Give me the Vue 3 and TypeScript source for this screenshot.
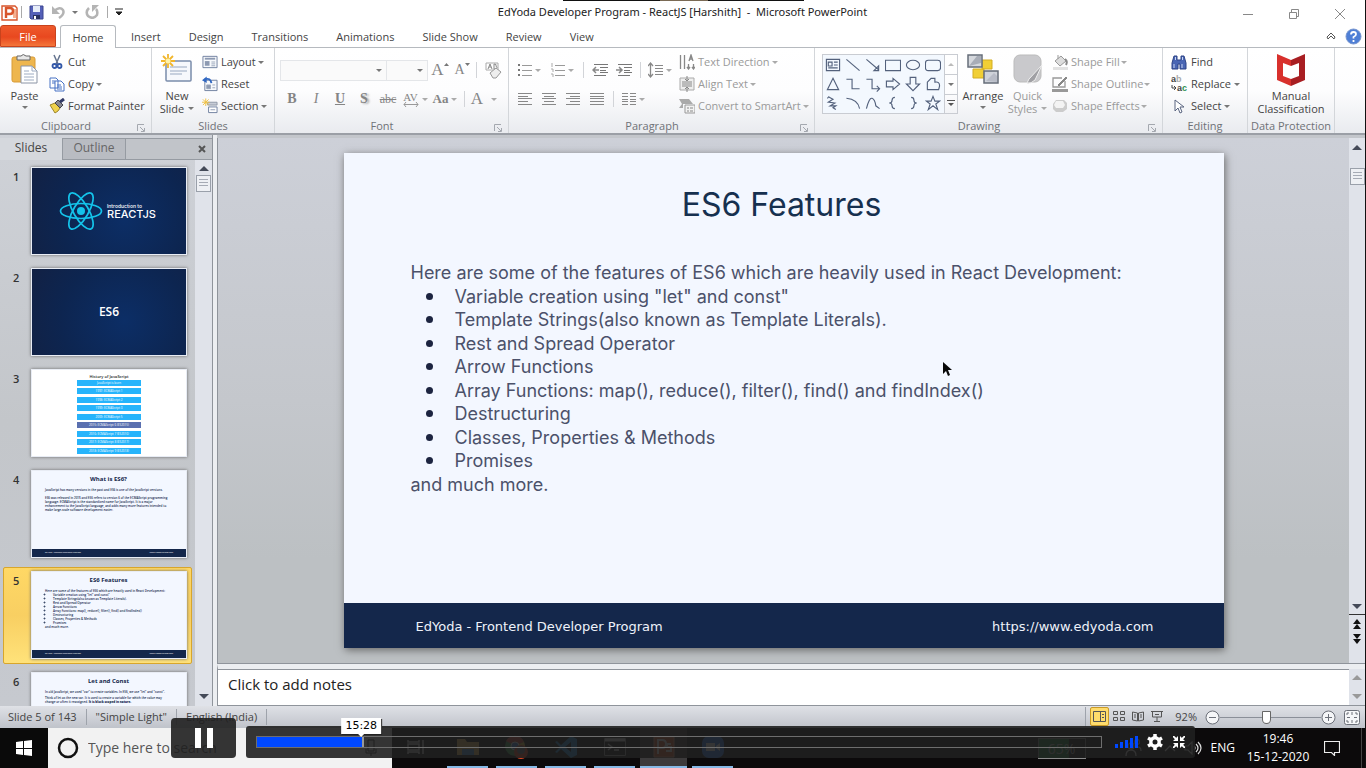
<script setup lang="ts">
import { ref, computed } from 'vue'

const tabs: string[] = ['Insert', 'Design', 'Transitions', 'Animations', 'Slide Show', 'Review', 'View']

const shapes: string[] = [
  'M1 2h14v12H1zM3 5h4v4H3zM9 5h4M9 8h4M3 11h10',
  'M1 2l14 12',
  'M1 2l13 11M14 9v5h-5z',
  'M0 3h16v11H0z',
  'M15 8a7 5 0 1 1-14 0a7 5 0 1 1 14 0',
  'M3 3h10q3 0 3 3v5q0 3-3 3H3q-3 0-3-3V6q0-3 3-3z',
  'M8 2l6 12H2z',
  'M1 3h6v10h8',
  'M1 3h6v10h8M12 10l3 3-3 3',
  'M1 5h7V2l7 6-7 6v-3H1z',
  'M5 1h6v7h4l-7 7-7-7h4z',
  'M2 6l4-4h4v4q5-1 5 4l-1 4H2z',
  'M4 2l4 2-5 3 7 1-5 3 6 0-3 2 3 2M2 3l2-2',
  'M1 3q12 1 14 11',
  'M1 14Q4 2 7 3t4 8l4 3',
  'M10 2q-3 0-3 3t-3 3q3 0 3 3t3 3',
  'M6 2q3 0 3 3t3 3q-3 0-3 3t-3 3',
  'M8 1l2 5h5l-4 3 2 6-5-4-5 4 2-6-4-3h5z',
]

const bullets: string[] = [
  'Variable creation using "let" and const"',
  'Template Strings(also known as Template Literals).',
  'Rest and Spread Operator',
  'Arrow Functions',
  'Array Functions: map(), reduce(), filter(), find() and findIndex()',
  'Destructuring',
  'Classes, Properties & Methods',
  'Promises',
]

const history: string[] = [
  'JavaScript is born',
  '1997: ECMAScript 1',
  '1998: ECMAScript 2',
  '1999: ECMAScript 3',
  '2009: ECMAScript 5',
  '2015: ECMAScript 6 (ES2015)',
  '2016: ECMAScript 7 (ES2016)',
  '2017: ECMAScript 8 (ES2017)',
  '2018: ECMAScript 9 (ES2018)',
]

const zoom = ref<number>(46)
const duration = 7460
const position = ref<number>(928)
const percent = computed<number>(() => (position.value / duration) * 100)
const clock = computed<string>(
  () => `${Math.floor(position.value / 60)}:${String(position.value % 60).padStart(2, '0')}`,
)
const notes = ref<string>('')
const query = ref<string>('')
</script>

<template>
  <div class="screen">
    <div class="share-strip"><i></i></div>

    <header class="titlebar">
      <div class="quick">
        <svg class="app" width="17" height="17" viewBox="0 0 17 17"><path d="M1 2h13l2 2v12H1z" fill="#fff" stroke="#d8552c" stroke-width="1.4" /><path d="M12 5h3v9h-3" fill="#f5b08f" /><path d="M5 14V4h4q3 0 3 3t-3 3H5" fill="none" stroke="#d8552c" stroke-width="2.400" /></svg>
        <span class="vbar"></span>
        <button aria-label="Save"><svg width="15" height="15" viewBox="0 0 15 15"><path d="M1 1h13v13H2l-1-1z" fill="#5460b8" stroke="#3a448f" /><path d="M4 1h7v6H4z" fill="#e6ecf8" /><path d="M4 10h7v4H4z" fill="#28305f" /><path d="M5 11h2v3H5z" fill="#fff" /></svg></button>
        <button aria-label="Undo"><svg width="15" height="14" viewBox="0 0 15 14"><path d="M3 6q6-5 9-1 2 4-4 8" fill="none" stroke="#b4b4b4" stroke-width="2.500" /><path d="M1 1v8h8z" fill="#b4b4b4" /></svg><span class="caret"></span></button>
        <button aria-label="Redo"><svg width="15" height="14" viewBox="0 0 15 14"><path d="M4 3q-4 4-1 8 5 4 9-1 1-4-1-6" fill="none" stroke="#b4b4b4" stroke-width="2.500" /><path d="M7 7V0h7z" fill="#b4b4b4" /></svg></button>
        <span class="vbar"></span>
        <button aria-label="Customize toolbar"><svg width="8" height="8" viewBox="0 0 8 8"><path d="M0 1h8M1 4h6L4 7z" stroke="#222" fill="#222" /></svg></button>
      </div>
      <h1>EdYoda Developer Program - ReactJS [Harshith]&nbsp; -&nbsp; Microsoft PowerPoint</h1>
      <div class="win">
        <button aria-label="Minimize"><svg width="12" height="12" viewBox="0 0 12 12"><path d="M1 6.500h10" /></svg></button>
        <button aria-label="Restore"><svg width="12" height="12" viewBox="0 0 12 12"><path d="M1.500 4.500h7v6h-7zM3.500 4V1.500h7v7H9" /></svg></button>
        <button aria-label="Close"><svg width="12" height="12" viewBox="0 0 12 12"><path d="M1 1l10 10M11 1L1 11" /></svg></button>
      </div>
    </header>

    <nav class="tabs">
      <button class="file">File</button>
      <button class="home">Home</button>
      <button v-for="t in tabs" :key="t" class="tab">{{ t }}</button>
      <span class="grow"></span>
      <button class="mini" aria-label="Minimize the ribbon"><svg width="10" height="8" viewBox="0 0 10 8"><path d="M1 5l4-4 4 4-1 2-3-3-3 3z" fill="#fff" stroke="#555" /></svg></button>
      <button class="mini help" aria-label="Help"><svg width="17" height="17" viewBox="0 0 17 17"><circle cx="8.500" cy="8.500" r="7.500" fill="#4f7fd6" stroke="#7896cf" /><path d="M6 6.500Q6 4 8.500 4T11 6.300Q11 8 8.500 9v1.500M8.500 12v2" fill="none" stroke="#fff" stroke-width="1.800" /></svg></button>
    </nav>

    <section class="ribbon">
      <div class="group clipboard">
        <div class="tools">
          <button class="big"><svg width="28" height="30" viewBox="0 0 28 30"><rect x="1" y="3" width="23" height="25" rx="2" fill="#eeb64e" stroke="#d89b37" /><path d="M6 2h4q2-3 5 0h4v4H6z" fill="#e8e8e8" stroke="#666" /><path d="M10 12h11l5 5v12H10z" fill="#fff" stroke="#8b94a5" /><path d="M21 12v5h5M13 17h5M13 20h10M13 23h10M13 26h10" fill="none" stroke="#9eacc2" /></svg><span>Paste</span><i class="caret"></i></button>
          <div class="stack">
            <button><svg width="16" height="16" viewBox="0 0 16 16"><path d="M5 1l4 9M11 1L7 10" stroke="#64738e" stroke-width="1.500" /><circle cx="5.500" cy="12" r="2" fill="none" stroke="#3358a8" stroke-width="1.800" /><circle cx="10.500" cy="12" r="2" fill="none" stroke="#3358a8" stroke-width="1.800" /></svg>Cut</button>
            <button><svg width="16" height="16" viewBox="0 0 16 16"><path d="M1 2h6l2 2v8H1zM6 5h6l3 3v7H6z" fill="#fff" stroke="#4872c4" /><path d="M3 5h3M3 7h3M8 9h4M8 11h5M8 13h5" stroke="#4872c4" /></svg>Copy<i class="caret"></i></button>
            <button><svg width="16" height="16" viewBox="0 0 16 16"><path d="M1 7l5-2 5 5-2 3-3 2z" fill="#f0d24c" stroke="#9c852c" /><path d="M6 5l3-3 5 5-3 3z" fill="#868690" stroke="#44444c" /><path d="M11 4l4-3" stroke="#333a66" stroke-width="3" /></svg>Format Painter</button>
          </div>
        </div>
        <div class="cap"><span>Clipboard</span><button class="launch" aria-label="Clipboard options"><svg width="8" height="8" viewBox="0 0 8 8"><path d="M.5 7V.5H7" /><path d="M3 3l4 4M7.500 4v3.500H4" /></svg></button></div>
      </div>

      <div class="group slides-g">
        <div class="tools">
          <button class="big"><svg width="32" height="30" viewBox="0 0 32 30"><rect x="5" y="7" width="25" height="20" rx="1" fill="#f6f8fc" stroke="#7a8cab" stroke-width="1.500" /><path d="M9 13h17M9 17h17M9 20h12" stroke="#b8c2d4" stroke-width="1.500" /><path d="M7 0v14M0 7h14M2 2l10 10M12 2L2 12" stroke="#f1b62c" stroke-width="1.800" /><circle cx="7" cy="7" r="2.500" fill="#fff2a8" /></svg><span>New</span><span>Slide <i class="caret"></i></span></button>
          <div class="stack">
            <button><svg width="16" height="14" viewBox="0 0 17 14"><path d="M1 1h15v12H1z" fill="#f7f9fc" stroke="#6e7f9e" /><path d="M3 3.500h11" stroke="#8d9ab2" stroke-width="2" /><path d="M3 6h5v5H3z" fill="#8d9ab2" /><path d="M10 7h4M10 9h4M10 11h4" stroke="#9aa6bb" /></svg>Layout<i class="caret"></i></button>
            <button><svg width="16" height="16" viewBox="0 0 17 16"><path d="M3 4h13v11H3z" fill="#f7f9fc" stroke="#6e7f9e" /><path d="M5 9h4v4H5zM11 9h3M11 12h3" fill="#8d9ab2" stroke="#9aa6bb" /><path d="M3 3q6-2 7 4" fill="none" stroke="#3168c2" stroke-width="2" /><path d="M0 4l5-4v7z" fill="#3168c2" /></svg>Reset</button>
            <button><svg width="16" height="16" viewBox="0 0 17 16"><path d="M6 4h10v3H6z" fill="#c7ccd6" stroke="#8e97a8" /><path d="M7 9h9v6H7z" fill="#fff" stroke="#6e7f9e" /><path d="M9 12h5" stroke="#8d9ab2" /><path d="M4 0v8M0 4h8M1 1l6 6M7 1L1 7" stroke="#efc03f" /></svg>Section<i class="caret"></i></button>
          </div>
        </div>
        <div class="cap"><span>Slides</span></div>
      </div>

      <div class="group font-g dis">
        <div class="rows">
          <div class="row">
            <label class="combo face"><select aria-label="Font" disabled></select><i class="caret"></i></label>
            <label class="combo size"><select aria-label="Font size" disabled></select><i class="caret"></i></label>
            <button class="w24 serif s18" aria-label="Grow font">A<svg width="5" height="4" viewBox="0 0 5 4"><path d="M0 3l2.500-3L5 3z" /></svg></button>
            <button class="w20 serif s15" aria-label="Shrink font">A<svg width="5" height="4" viewBox="0 0 5 4"><path d="M0 0l2.500 3L5 0z" /></svg></button>
            <span class="vbar"></span>
            <button class="w24" aria-label="Clear formatting"><svg width="17" height="17" viewBox="0 0 17 17"><path d="M1 1h12v7H1z" fill="#fff" stroke="#aaa" /><path d="M3 7l2-5 2 5M4 5h2M9 2v5h2q2-1 0-3 1-2-2-2" fill="none" stroke="#888" /><path d="M5 11l6-5 5 4-5 6H8z" fill="#eee" stroke="#999" /></svg></button>
          </div>
          <div class="row">
            <button class="w24 serif bold">B</button>
            <button class="w24 serif ital">I</button>
            <button class="w24 serif bold und">U</button>
            <button class="w24 serif bold shade">S</button>
            <button class="w24 serif strike">abc</button>
            <button class="w30 serif spacing"><span>AV<svg width="16" height="5" viewBox="0 0 16 5"><path d="M1 2.500h14M3 0L1 2.500 3 5M13 0l2 2.500L13 5" fill="none" stroke="#999" /></svg></span><i class="caret"></i></button>
            <button class="w30 serif bold aa">Aa<i class="caret"></i></button>
            <span class="vbar"></span>
            <button class="w30 serif s18">A<i class="caret far"></i></button>
          </div>
        </div>
        <div class="cap"><span>Font</span><button class="launch" aria-label="Font options"><svg width="8" height="8" viewBox="0 0 8 8"><path d="M.5 7V.5H7" /><path d="M3 3l4 4M7.500 4v3.500H4" /></svg></button></div>
      </div>

      <div class="group para dis">
        <div class="tools">
          <div class="rows">
            <div class="row">
              <button class="w33" aria-label="Bullets"><svg width="14" height="14" viewBox="0 0 14 14"><path d="M0 2h2M0 7h2M0 12h2" stroke="#777" stroke-width="2" /><path d="M4 2.500h10M4 7.500h10M4 12.500h10" stroke="#999" /></svg><i class="caret"></i></button>
              <button class="w33" aria-label="Numbering"><svg width="14" height="14" viewBox="0 0 14 14"><path d="M1 0v4M0 6h2v3M0 11h2v3" stroke="#aaa" fill="none" /><path d="M4 2.500h10M4 7.500h10M4 12.500h10" stroke="#999" /></svg><i class="caret"></i></button>
              <span class="vbar"></span>
              <button class="w24" aria-label="Decrease indent"><svg width="16" height="14" viewBox="0 0 16 14"><path d="M2 1.500h14M8 4.500h8M8 7.500h6M8 9.500h8M2 12.500h12" stroke="#777" /><path d="M7 7H1M4 4L1 7l3 3" fill="none" stroke="#888" stroke-width="1.500" /></svg></button>
              <button class="w24" aria-label="Increase indent"><svg width="16" height="14" viewBox="0 0 16 14"><path d="M2 1.500h14M8 4.500h8M8 7.500h6M8 9.500h8M2 12.500h12" stroke="#777" /><path d="M0 7h6M3 4l3 3-3 3" fill="none" stroke="#888" stroke-width="1.500" /></svg></button>
              <span class="vbar"></span>
              <button class="w30" aria-label="Line spacing"><svg width="15" height="16" viewBox="0 0 15 16"><path d="M2.500 1v14M0 4l2.500-3L5 4M0 12l2.500 3L5 12" fill="none" stroke="#888" stroke-width="1.300" /><path d="M7 3.500h8M7 6.500h8M7 9.500h8M7 12.500h8" stroke="#888" /></svg><i class="caret"></i></button>
            </div>
            <div class="row">
              <button class="w24" aria-label="Align left"><svg class="al" width="14" height="12" viewBox="0 0 14 12"><path d="M0 .5h14M0 3.500h10M0 5.500h14M0 8.500h10M0 11.500h14" /></svg></button>
              <button class="w24" aria-label="Center"><svg class="al" width="14" height="12" viewBox="0 0 14 12"><path d="M0 .5h14M2 3.500h10M0 5.500h14M2 8.500h10M0 11.500h14" /></svg></button>
              <button class="w24" aria-label="Align right"><svg class="al" width="14" height="12" viewBox="0 0 14 12"><path d="M0 .5h14M4 3.500h10M0 5.500h14M4 8.500h10M0 11.500h14" /></svg></button>
              <button class="w24" aria-label="Justify"><svg class="al" width="14" height="12" viewBox="0 0 14 12"><path d="M0 .5h14M0 3.500h14M0 5.500h14M0 8.500h14M0 11.500h14" /></svg></button>
              <span class="vbar"></span>
              <button class="w30 cols" aria-label="Columns"><svg class="al" width="14" height="12" viewBox="0 0 14 12"><path d="M0 .5h6M8 .5h6M0 3.500h6M8 3.500h6M0 6.500h6M8 6.500h6M0 8.500h6M8 8.500h6M0 11.500h6M8 11.500h6" /></svg><i class="caret"></i></button>
            </div>
          </div>
          <div class="stack">
            <button><svg width="16" height="16" viewBox="0 0 16 16"><path d="M1.500 1v14M5.500 1v14M10 7l2-6 2 6M10.500 5h3M9.500 10v5M14.500 10v5M8 13l1.500 2 1.500-2M13 13l1.500 2 1.500-2" fill="none" stroke="#888" stroke-width="1.300" /></svg>Text Direction<i class="caret"></i></button>
            <button><svg width="16" height="16" viewBox="0 0 16 16"><path d="M1 2h14v12H1z" fill="#eee" stroke="#aaa" /><path d="M3 6h10M3 8h10M3 10h10M8 0v5M6 3l2 2 2-2M8 16v-4M6 13l2-2 2 2" fill="none" stroke="#888" /></svg>Align Text<i class="caret"></i></button>
            <button><svg width="16" height="16" viewBox="0 0 16 16"><path d="M0 1h10l4 5H4v4H0l3-4z" fill="#aaa" /><path d="M6 7h10v8H6z" fill="#f2f2f2" stroke="#999" /><path d="M8 10h2M11 10h3M8 13h2M11 13h3" stroke="#888" /></svg>Convert to SmartArt<i class="caret"></i></button>
          </div>
        </div>
        <div class="cap"><span>Paragraph</span><button class="launch" aria-label="Paragraph options"><svg width="8" height="8" viewBox="0 0 8 8"><path d="M.5 7V.5H7" /><path d="M3 3l4 4M7.500 4v3.500H4" /></svg></button></div>
      </div>

      <div class="group drawing">
        <div class="tools">
          <div class="gallery">
            <div class="cells">
              <button v-for="(d, i) in shapes" :key="i" :aria-label="`Shape ${i + 1}`"><svg width="16" height="16" viewBox="-0.5 -0.5 17 17"><path :d="d" /></svg></button>
            </div>
            <div class="scroller">
              <button aria-label="Previous shapes"><i class="caret up pale"></i></button>
              <button aria-label="Next shapes"><i class="caret"></i></button>
              <button aria-label="More shapes"><svg width="8" height="7" viewBox="0 0 8 7"><path d="M0 .5h8" stroke="#555" /><path d="M1 3h6L4 6z" fill="#555" /></svg></button>
            </div>
          </div>
          <button class="big arrange"><svg width="32" height="30" viewBox="0 0 32 30"><path d="M6 15h11v9H6zM15 6h10v9H15z" fill="#f1cf35" stroke="#d3ad22" /><path d="M1 1h14v12H1z" fill="#d5d8dd" stroke="#666d79" stroke-width="1.500" /><path d="M2 12L10 2h4v7z" fill="#a8adb7" /><path d="M17 17h14v12H17z" fill="#cfd3da" stroke="#666d79" stroke-width="1.500" /><path d="M19 27l8-8 3 3v6z" fill="#b8bcc7" /></svg><span>Arrange</span><i class="caret"></i></button>
          <button class="big quick-st dis"><svg width="32" height="30" viewBox="0 0 32 30"><rect x="2" y="1" width="27" height="27" rx="6" fill="#c9c9cc" stroke="#bbb" /><path d="M17 25l13-14-7 15q-4 4-8 3z" fill="#a0a0a4" stroke="#eee" /></svg><span>Quick</span><span>Styles <i class="caret"></i></span></button>
          <div class="stack dis">
            <button><svg width="17" height="16" viewBox="0 0 17 16"><path d="M1 13h15v3H1z" fill="#e2e2e2" /><path d="M3 7l6-5 5 5-6 5zM6 5V1" fill="#ddd" stroke="#999" /><path d="M13 5q3 2 1 6" fill="none" stroke="#888" stroke-width="2" /></svg>Shape Fill<i class="caret"></i></button>
            <button><svg width="17" height="16" viewBox="0 0 17 16"><path d="M13 5v6H1V2h9" fill="none" stroke="#999" stroke-width="1.300" /><path d="M6 9L14 1l1 1-8 8z" fill="#888" stroke="#888" /><path d="M0 13h16v3H0z" fill="#999" /></svg>Shape Outline<i class="caret"></i></button>
            <button><svg width="17" height="16" viewBox="0 0 17 16"><path d="M4 2h8l3 3v6l-4 3H4l-3-3V6z" fill="#ccc" /><path d="M4 3h7l2 4-2 3H4L2 7z" fill="#f3f3f3" /></svg>Shape Effects<i class="caret"></i></button>
          </div>
        </div>
        <div class="cap"><span>Drawing</span><button class="launch" aria-label="Drawing options"><svg width="8" height="8" viewBox="0 0 8 8"><path d="M.5 7V.5H7" /><path d="M3 3l4 4M7.500 4v3.500H4" /></svg></button></div>
      </div>

      <div class="group editing">
        <div class="tools">
          <div class="stack">
            <button><svg width="16" height="15" viewBox="0 0 16 15"><path d="M3 1h3v4h4V1h3l2 7v6h-6V9H7v5H1V8z" fill="#4a66b4" stroke="#2d4386" /><path d="M3 9v4M11 9v4M4.500 2v3M11.500 2v3" stroke="#c8d5f4" /></svg>Find</button>
            <button><svg class="ab" width="16" height="16" viewBox="0 0 16 16"><text x="0" y="6" class="g-dark">a<tspan class="g-pale">b</tspan></text><text x="6" y="15" class="g-dark">a<tspan class="g-green">c</tspan></text><path d="M1 9v3h4M3 10l2 2-2 2" fill="none" stroke="#444" /></svg>Replace<i class="caret"></i></button>
            <button><svg width="16" height="16" viewBox="0 0 16 16"><path d="M4 2v11l3-3 2 5 2-1-2-5h4z" fill="#fff" stroke="#5a6580" /></svg>Select<i class="caret"></i></button>
          </div>
        </div>
        <div class="cap"><span>Editing</span></div>
      </div>

      <div class="group protect">
        <div class="tools">
          <button class="big"><svg width="28" height="32" viewBox="0 0 28 32"><path d="M0 0l14 6v6l-8-3v13l8 3v7L0 26z" fill="#d8302c" /><path d="M28 0L14 6v6l8-3v13l-8 3v7l14-6z" fill="#a81e22" /></svg><span>Manual</span><span>Classification</span></button>
        </div>
        <div class="cap"><span>Data Protection</span></div>
      </div>
    </section>

    <main class="work">
      <aside class="pane">
        <div class="pane-tabs">
          <button class="on">Slides</button>
          <button class="off">Outline</button>
          <button class="x" aria-label="Close pane"><svg width="8" height="8" viewBox="0 0 8 8"><path d="M1 1l6 6M7 1L1 7" stroke="#555" stroke-width="2" /></svg></button>
        </div>
        <div class="pane-body">
          <ol class="thumbs">
            <li><b>1</b><div class="thumb navy intro"><svg width="44" height="40" viewBox="-22 -20 44 40"><g fill="none" stroke="#14c3ea" stroke-width="1.700"><ellipse rx="20.500" ry="7.500" /><ellipse rx="20.500" ry="7.500" transform="rotate(60)" /><ellipse rx="20.500" ry="7.500" transform="rotate(120)" /></g><circle r="4" fill="#14c3ea" /></svg><p><small>Introduction to</small>REACTJS</p></div></li>
            <li><b>2</b><div class="thumb navy solo">ES6</div></li>
            <li><b>3</b><div class="thumb hist"><h3>History of JavaScript</h3><span v-for="(h, i) in history" :key="h" :class="{ mark: i === 5 }">{{ h }}</span></div></li>
            <li><b>4</b><div class="thumb page"><h3>What is ES6?</h3><p>JavaScript has many versions in the past and ES6 is one of the JavaScript versions.</p><p>ES6 was released in 2015 and ES6 refers to version 6 of the ECMAScript programming language. ECMAScript is the standardized name for JavaScript. It is a major enhancement to the JavaScript language, and adds many more features intended to make large-scale software development easier.</p><footer><span>EdYoda - Frontend Developer Program</span><span>https://www.edyoda.com</span></footer></div></li>
            <li class="sel"><b>5</b><div class="thumb page five"><h3>ES6 Features</h3><p>Here are some of the features of ES6 which are heavily used in React Development:</p><ul><li v-for="b in bullets" :key="b">{{ b }}</li></ul><p>and much more.</p><footer><span>EdYoda - Frontend Developer Program</span><span>https://www.edyoda.com</span></footer></div></li>
            <li><b>6</b><div class="thumb page last"><h3>Let and Const</h3><p>In old JavaScript, we used "var" to create variables. In ES6, we use "let" and "const".</p><p>Think of let as the new var. It is used to create a variable for which the value may change or often it reassigned. <strong>It is block scoped in nature.</strong></p></div></li>
          </ol>
          <div class="vscroll side"><i class="caret up"></i><span class="knob"></span><span class="grow"></span><i class="caret down"></i></div>
        </div>
      </aside>

      <div class="editor">
        <div class="canvas">
          <div class="stage">
            <article class="slide">
              <h2>ES6 Features</h2>
              <div class="body">
                <p>Here are some of the features of ES6 which are heavily used in React Development:</p>
                <p v-for="b in bullets" :key="b" class="item">{{ b }}</p>
                <p>and much more.</p>
              </div>
              <footer><span>EdYoda - Frontend Developer Program</span><span>https://www.edyoda.com</span></footer>
              <svg class="pointer" width="10" height="16" viewBox="0 0 10 16"><path d="M1 1v12l3-3 2 5 2-1-2-5h4z" fill="#080808" /></svg>
            </article>
          </div>
          <div class="vscroll"><i class="caret up"></i><span class="knob"></span><span class="grow"></span><i class="caret down"></i><div class="jump"><i class="caret up"></i><i class="caret up"></i><span></span><i class="caret down"></i><i class="caret down"></i></div></div>
        </div>
        <div class="notes">
          <textarea v-model="notes" aria-label="Notes" placeholder="Click to add notes"></textarea>
          <div class="vscroll grey"><i class="caret up"></i><span class="grow"></span><i class="caret down"></i></div>
        </div>
      </div>
    </main>

    <div class="status">
      <span class="st">Slide 5 of 143</span>
      <span class="st">"Simple Light"</span>
      <span class="st">English (India)</span>
      <span class="grow"></span>
      <div class="views">
        <button class="on" aria-label="Normal"><svg width="13" height="11" viewBox="0 0 13 11"><path d="M.5.500h12v10H.5zM7.500.5v10M9 3.500h2M9 6.500h2" /></svg></button>
        <button aria-label="Slide sorter"><svg width="12" height="11" viewBox="0 0 12 11"><path d="M.5.500h4v3h-4zM7.500.500h4v3h-4zM.5 6.500h4v3h-4zM7.500 6.500h4v3h-4z" /></svg></button>
        <button aria-label="Reading view"><svg width="12" height="11" viewBox="0 0 12 11"><path d="M.5 1l5 1v8l-5-1zM11.500 1l-5 1v8l5-1zM2 4h2M2 6h2M8 4h2M8 6h2" /></svg></button>
        <button aria-label="Slide show"><svg width="12" height="11" viewBox="0 0 12 11"><path d="M0 .5h12M1.500 1v5h9V1M4 3.500h4M6 6v4M3 10.500h6" /></svg></button>
      </div>
      <span class="pct">92%</span>
      <button class="round" aria-label="Zoom out"><svg width="15" height="15" viewBox="0 0 15 15"><circle cx="7.500" cy="7.500" r="6.500" /><path d="M4 7.500h7" /></svg></button>
      <input v-model.number="zoom" class="zoom" type="range" min="0" max="100" aria-label="Zoom" />
      <button class="round" aria-label="Zoom in"><svg width="15" height="15" viewBox="0 0 15 15"><circle cx="7.500" cy="7.500" r="6.500" /><path d="M4 7.500h7M7.500 4v7" /></svg></button>
      <button class="round" aria-label="Fit slide"><svg width="16" height="15" viewBox="0 0 16 15"><rect x=".5" y=".5" width="15" height="14" rx="2" /><path d="M3 5V3h2M11 3h2v2M13 10v2h-2M5 12H3v-2M8 2v3M8 10v3M3 7.500h3M10 7.500h3" /></svg></button>
    </div>

    <footer class="taskbar">
      <button class="start" aria-label="Start"><svg width="16" height="16" viewBox="0 0 16 16"><path d="M0 2l7-1v7H0zM8 1l8-1v8H8zM0 9h7v6l-7-1zM8 9h8v7l-8-1z" fill="#fff" /></svg></button>
      <label class="search"><svg width="22" height="22" viewBox="0 0 22 22"><circle cx="11" cy="11" r="9" fill="none" stroke="#111" stroke-width="2.500" /></svg><input v-model="query" type="text" placeholder="Type here to search" aria-label="Search" /><svg width="12" height="18" viewBox="0 0 12 18"><path d="M3 1h6v11H3zM1 10v4h10v-4M6 14v3" fill="none" stroke="#333" /></svg></label>
      <div class="apps">
        <button class="plain" aria-label="Task view"><svg width="18" height="16" viewBox="0 0 18 16"><path d="M1 1v2h11V1M1 15v-2h11v2M1 5h11v6H1zM16 1v14" fill="none" stroke="#ddd" stroke-width="1.500" /></svg></button>
        <button aria-label="File Explorer"><svg width="22" height="20" viewBox="0 0 22 20"><path d="M0 2h8l2 3h12v13H0z" fill="#f2c45a" /><path d="M5 12h12v6H5z" fill="#4a9be0" /></svg></button>
        <button aria-label="Chrome"><svg width="26" height="24" viewBox="0 0 26 24"><circle cx="11" cy="11" r="10" fill="#3ca550" /><path d="M11 11L2 6a10 10 0 0 1 18 1z" fill="#dd4b3e" /><path d="M11 11l9-4a10 10 0 0 1-8 14z" fill="#f3c73c" /><circle cx="11" cy="11" r="4" fill="#4a83ea" stroke="#fff" /><circle cx="17" cy="17" r="7" fill="#e34a24" /><circle cx="17" cy="15" r="4" fill="#6b7077" /></svg></button>
        <button aria-label="Visual Studio Code"><svg width="24" height="22" viewBox="0 0 24 22"><path d="M17 0l6 3v16l-6 3L7 13l-4 4-2-1 5-5-5-5 2-1 4 4zM17 6l-6 5 6 5z" fill="#1f92dc" fill-rule="evenodd" /></svg></button>
        <button aria-label="Command Prompt"><svg width="22" height="18" viewBox="0 0 22 18"><path d="M.5.500h21v17H.5z" fill="#111" stroke="#999" /><path d="M1 2h20" stroke="#ddd" stroke-width="3" /><path d="M4 6l4 3-4 3M10 12h5" fill="none" stroke="#ddd" stroke-width="1.500" /></svg></button>
        <button class="active" aria-label="PowerPoint"><svg width="22" height="22" viewBox="0 0 22 22"><path d="M1 1h20v20H1z" fill="#da5a2e" stroke="#f2a180" /><path d="M5 18V4h4q4 0 4 4t-4 4H5M18 8h-4v3h4v4h-5" fill="none" stroke="#fff" stroke-width="2" /></svg></button>
        <button aria-label="Zoom"><svg width="22" height="22" viewBox="0 0 22 22"><rect width="22" height="22" rx="7" fill="#2e7cf0" /><path d="M4 7h9v8H4zM14 10l4-3v8l-4-3z" fill="#fff" /></svg></button>
      </div>
      <span class="grow"></span>
      <div class="battery">65%</div>
      <svg class="people" width="18" height="18" viewBox="0 0 18 18"><g fill="none" stroke="#ddd" stroke-width="1.300"><circle cx="7" cy="7" r="3" /><path d="M2 17q0-6 5-6t5 6" /><circle cx="13" cy="3" r="2.500" /><path d="M12 8q5-1 5 4" /></g></svg>
      <svg class="chev" width="12" height="8" viewBox="0 0 12 8"><path d="M1 7l5-5 5 5" fill="none" stroke="#eee" stroke-width="1.300" /></svg>
      <svg class="sound" width="18" height="14" viewBox="0 0 18 14"><g fill="none" stroke="#ddd" stroke-width="1.200"><path d="M1 5h3l4-4v12L4 9H1zM10 5q2 2 0 4M12 3q4 4 0 8M14 1q6 6 0 12" /></g></svg>
      <span class="lang">ENG</span>
      <div class="clock"><span>19:46</span><span>15-12-2020</span></div>
      <button class="notify" aria-label="Notifications"><svg width="16" height="16" viewBox="0 0 16 16"><path d="M.5 1.500h15v11h-5v3l-3-3h-7z" fill="none" stroke="#eee" stroke-width="1.200" /></svg></button>
    </footer>

    <div class="player">
      <button class="pause" aria-label="Pause"><i></i><i></i></button>
      <div class="controls">
        <div class="track">
          <output :style="{ left: percent + '%' }">{{ clock }}</output>
          <input v-model.number="position" type="range" min="0" :max="duration" aria-label="Seek" :style="{ backgroundSize: percent + '% 100%' }" />
        </div>
        <div class="volume"><i v-for="n in 5" :key="n" :style="{ height: 2 + n * 2 + 'px' }"></i></div>
        <button aria-label="Settings"><svg width="16" height="16" viewBox="-8 -8 16 16"><circle r="4.200" fill="none" stroke="#fff" stroke-width="3.400" /><path d="M0-5v-3M0 5v3M4.300-2.500L7-4M-4.300 2.500L-7 4M4.300 2.500L7 4M-4.300-2.500L-7-4" stroke="#fff" stroke-width="3.500" /></svg></button>
        <button aria-label="Exit full screen"><svg width="12" height="12" viewBox="0 0 12 12"><path d="M5 0v5H0zM7 0l5 5H7zM0 7h5v5zM7 7h5l-5 5z" fill="#fff" /><path d="M0 0l4 4M12 0L8 4M0 12l4-4M12 12L8 8" stroke="#fff" stroke-width="1.800" /></svg></button>
      </div>
    </div>
  </div>
</template>

<style>
body { margin: 0; background: #000; }
</style>

<style scoped>
* { box-sizing: border-box; }
.screen { position: relative; height: 100vh; display: flex; flex-direction: column; overflow: hidden; border-right: 1px solid #111; background: #fff; font: 11px/14px "Open Sans", "Noto Sans", sans-serif; color: #444; }
button { font: inherit; color: inherit; background: none; border: 0; padding: 0; margin: 0; display: flex; align-items: center; justify-content: center; }
h1, h2, h3, p, ol, ul { margin: 0; padding: 0; font-weight: 400; }
svg { flex: none; display: block; }
.grow { flex: 1; }
.caret { display: inline-block; flex: none; width: 0; height: 0; border: 3px solid transparent; border-top-color: #777; border-bottom: 0; }
.caret.up { border: 5px solid transparent; border-bottom-color: #444a58; border-top: 0; }
.caret.down { border: 5px solid transparent; border-top: 5px solid #444a58; border-bottom: 0; }
.vbar { width: 1px; height: 16px; background: #d2d4d8; flex: none; }
.dis { color: #9a9a9a; }
.dis .caret { border-top-color: #aaa; }
.share-strip { position: absolute; top: 0; left: 563px; width: 241px; height: 1px; background: #111; display: flex; justify-content: center; }
.share-strip i { width: 48px; background: #7a6a55; }

.titlebar { height: 24px; flex: none; display: grid; grid-template-columns: 1fr auto 1fr; align-items: center; }
.titlebar h1 { font: 11px/24px "Noto Sans", "Open Sans", sans-serif; color: #222; white-space: pre; }
.quick { display: flex; align-items: center; gap: 7px; padding-left: 1px; height: 22px; }
.quick .vbar { height: 12px; background: #aaa; }
.quick button { gap: 6px; }
.quick .app + .vbar { margin-left: -4px; }
.win { display: flex; justify-content: flex-end; padding: 4px 2px 0 0; }
.win button { width: 46px; height: 19px; }
.win svg { fill: none; stroke: #888; }

.tabs { height: 24px; flex: none; display: flex; align-items: stretch; border-bottom: 1px solid #b6babf; padding-top: 1px; }
.tabs .file { width: 56px; margin-right: 4px; color: #fff; background: linear-gradient(#ee5a2c, #e8481f 55%, #f4763a); border: 1px solid #c8431d; border-radius: 3px 3px 0 0; padding-top: 2px; }
.tabs .home { width: 56px; height: 24px; border: 1px solid #b6babf; border-bottom: 0; border-radius: 3px 3px 0 0; background: #fff; }
.tabs .tab { padding: 2px 14px 0; }
.tabs .home + .tab { margin-left: 1px; }
.mini { width: 20px; }
.mini.help { width: 24px; }

.ribbon { flex: none; height: 87px; display: flex; background: linear-gradient(#fff, #fdfdfe 50%, #e9ebef); border-bottom: 2px solid #9b9fa6; }
.group { display: flex; flex-direction: column; flex: none; border-right: 1px solid #d3d6da; padding-top: 3px; }
.tools { display: flex; height: 66px; }
.cap { display: flex; align-items: center; height: 18px; padding-top: 2px; color: #6f7277; }
.cap span { flex: 1; text-align: center; white-space: nowrap; }
.launch { margin: 3px 6px 0 5px; }
.launch svg { fill: none; stroke: #a4a8af; }
.big { flex-direction: column; justify-content: flex-start; padding-top: 3px; height: 66px; line-height: 13px; flex: none; }
.big svg { margin-bottom: 5px; height: 30px; }
.big span { display: flex; align-items: center; gap: 4px; white-space: nowrap; }
.big > .caret { margin-top: 4px; }
.stack button { height: 22px; gap: 4px; justify-content: flex-start; white-space: nowrap; }
.stack .caret { margin-left: -1px; }
.clipboard { width: 152px; }
.clipboard .big { width: 49px; }
.clipboard .stack button { gap: 3px; }
.slides-g { width: 123px; }
.slides-g .big { width: 50px; }
.slides-g .stack button { gap: 3px; }
.font-g { width: 234px; }
.para { width: 306px; }
.drawing { width: 348px; }
.editing { width: 85px; }
.editing .stack { padding-left: 8px; }
.protect { width: 87px; }
.protect .big { width: 86px; }
.protect .big svg { height: 32px; margin-bottom: 3px; }
.rows { height: 66px; padding: 8px 0 0 5px; display: flex; flex-direction: column; gap: 7px; }
.font-g .rows { height: 66px; flex: none; }
.row { display: flex; align-items: center; height: 22px; }
.row button { height: 22px; flex: none; gap: 3px; }
.row .vbar { margin: 0 4px; }
.w20 { width: 20px; } .w24 { width: 24px; } .w30 { width: 30px; } .w33 { width: 33px; }
.combo { display: flex; align-items: center; position: relative; height: 21px; border: 1px solid #e4e6e9; background: #fafafa; }
.combo select { appearance: none; flex: 1; min-width: 0; border: 0; background: none; height: 19px; }
.combo .caret { margin-right: 4px; border-top-color: #777; }
.face { width: 107px; } .size { width: 41px; border-left: 0; }
.serif { font: 14px/16px "Liberation Serif", serif; color: #858585; }
.s18 { font-size: 17px; } .s15 { font-size: 14px; }
.bold { font-weight: 700; }
.aa { font-size: 13px; }
.ital { font-style: italic; }
.und { text-decoration: underline; }
.shade { text-shadow: 2px 1px 2px #aaa; }
.strike { text-decoration: line-through; font-size: 12px; }
.s18 svg, .s15 svg { fill: #777; margin: 0 0 10px -3px; }
.far { margin-left: 5px; }
.spacing { font-size: 11px; line-height: 10px; }
.spacing span { display: flex; flex-direction: column; }
.al { fill: none; stroke: #888; }
.para .stack { padding-left: 7px; }
.para .stack button { gap: 3px; }
.para .rows { width: 163px; padding-left: 4px; }
.gallery { display: flex; margin: 3px 0 0 7px; height: 60px; width: 136px; border: 1px solid #c9ccd2; flex: none; }
.cells { display: grid; grid-template-columns: repeat(6, 20px); grid-template-rows: repeat(3, 1fr); width: 121px; height: 58px; background: #f3f8fe; }
.cells svg { width: 16px; height: 16px; fill: none; stroke: #53617c; stroke-width: 1.2; }
.scroller { display: grid; flex: 1; grid-template-rows: repeat(3, 1fr); border-left: 1px solid #c9ccd2; }
.scroller button + button { border-top: 1px solid #c9ccd2; }
.scroller .pale { border-width: 3px; border-top: 0; border-bottom-color: #bbb; }
.arrange { width: 50px; }
.quick-st { width: 39px; }
.drawing .stack { padding-left: 5px; }
.drawing .stack button { gap: 2px; }
.ab { overflow: visible; }
.g-dark, .g-pale, .g-green { font: 700 9px "Liberation Sans", sans-serif; fill: #444; }
.g-pale { fill: #aaa; } .g-green { fill: #2d9152; }

.work { flex: 1; min-height: 0; display: flex; background: #c3c6cb; }
.pane { width: 213px; flex: none; display: flex; flex-direction: column; padding-top: 3px; border-right: 1px solid #8f949b; background: linear-gradient(#cfd2d8, #c3c6ca 50%, #c6c9cf); }
.pane-tabs { display: flex; height: 22px; flex: none; font-size: 12px; }
.pane-tabs button { padding-bottom: 2px; }
.pane-tabs .on { width: 62px; background: #d5d8dd; }
.pane-tabs .off { width: 64px; background: #b9bcc2; border: 1px solid #969ba2; color: #666; }
.pane-tabs .x { flex: 1; justify-content: flex-end; padding: 0 6px 0 0; background: #c1c4c9; border-top: 1px solid #969ba2; border-bottom: 1px solid #969ba2; }
.pane-body { flex: 1; min-height: 0; display: flex; }
.thumbs { flex: 1; overflow: hidden; list-style: none; padding: 3px 3px 0 3px; display: flex; flex-direction: column; gap: 4px; }
.thumbs > li { height: 97px; flex: none; display: flex; padding: 3px; border: 1px solid transparent; border-radius: 2px; }
.thumbs > li.sel { background: linear-gradient(#ffd865, #f8cf62 50%, #ffe27a); border-color: #d8a62c; }
.thumbs b { width: 24px; flex: none; padding: 3px 0 0 6px; font-weight: 600; font-size: 11px; color: #333; }
.thumb { width: 156px; height: 88px; flex: none; border: 1px solid #e8ecf4; box-shadow: 0 0 3px #666; overflow: hidden; font: 4px/4px "Open Sans", sans-serif; color: #14274b; }
.navy { background: radial-gradient(circle at 60% 60%, #0c2e66, #0d2550 60%, #122144); color: #fff; display: flex; align-items: center; }
.intro { padding-left: 27px; gap: 4px; }
.intro p { display: flex; flex-direction: column; font: 500 11px/11px Inter, "Open Sans", sans-serif; }
.intro small { font-size: 5px; line-height: 6px; }
.solo { justify-content: center; font: 600 12px/14px "Open Sans", sans-serif; }
.hist { background: #fff; display: flex; flex-direction: column; align-items: center; gap: 3px; padding-top: 4px; }
.hist h3 { font-size: 4px; line-height: 5px; margin-bottom: -2px; font-weight: 600; color: #222; }
.hist span { width: 64px; height: 6px; line-height: 6px; flex: none; font-size: 3px; text-align: center; background: #27b4fb; color: #fff; margin-bottom: -1px; }
.hist span:nth-of-type(even) { margin-bottom: 0; }
.hist span.mark { background: #5a70b0; }
.page { background: #f3f7ff; display: flex; flex-direction: column; padding: 5px 14px 0 13px; }
.page h3 { text-align: center; font-size: 6px; font-weight: 700; line-height: 7px; margin-bottom: 5px; }
.page p { margin-bottom: 4px; font-size: 3px; line-height: 4px; font-weight: 600; }
.page footer { margin: auto -14px 0 -13px; height: 8px; flex: none; background: #14274b; color: #fff; display: flex; justify-content: space-between; align-items: center; padding: 0 13px; font-size: 2px; }
.five h3 + p, .five p { margin-bottom: 0; }
.five ul { margin-left: 8px; font-size: 3px; line-height: 4px; font-weight: 600; }
.last p { margin-bottom: 2px; }

.vscroll { width: 16px; flex: none; display: flex; flex-direction: column; align-items: center; padding: 7px 0; background: #e0e3ea; }
.vscroll .knob { width: 15px; height: 17px; margin-top: 4px; border: 1px solid #9aa0aa; background: repeating-linear-gradient(#a6abb5 0 1px, transparent 1px 3px) center / 9px 9px no-repeat, #eef0f4; }
.side { width: 17px; padding-top: 6px; }
.editor { flex: 1; min-width: 0; display: flex; flex-direction: column; border-left: 4px solid #eceef1; padding-top: 3px; }
.canvas { flex: 1; min-height: 0; display: flex; border-left: 1px solid #8f949b; border-bottom: 1px solid #8f949b; }
.stage { flex: 1; min-width: 0; padding: 15px 0; display: flex; justify-content: center; background: linear-gradient(#cdd0d8, #c4c7cc 50%, #bcc0c3 80%); }
.canvas .knob { margin-top: 18px; }
.canvas .vscroll { padding-bottom: 0; }
.jump { display: flex; flex-direction: column; align-items: center; width: 16px; height: 49px; margin-top: 5px; padding-top: 4px; border-top: 1px solid #333; }
.jump span { height: 5px; }
.jump .caret.up { border-width: 4px; border-top: 0; border-bottom: 5px solid #111; }
.jump .caret.down { border-width: 4px; border-bottom: 0; border-top: 5px solid #111; }
.slide { position: relative; height: 100%; aspect-ratio: 16 / 9; display: flex; flex-direction: column; background: #f3f7ff; box-shadow: 1px 2px 8px #666; }
.slide h2 { text-align: center; font: 32px/40px Inter, "Open Sans", sans-serif; color: #16304f; padding: 32px 4px 0 0; }
.body { height: 235px; margin: 36px 0 0 67px; display: flex; flex-direction: column; justify-content: space-between; font: 300 18px/23px Inter, "Open Sans", sans-serif; color: #4b516a; white-space: nowrap; }
.item { display: flex; align-items: center; padding-left: 15px; }
.item::before { content: ""; width: 7px; height: 7px; border-radius: 50%; background: #1c2440; margin-right: 22px; }
.slide footer { margin-top: auto; height: 45px; padding: 2px 70px 0 72px; display: flex; justify-content: space-between; align-items: center; background: #14274b; color: #eef2fa; font: 13px/16px "DejaVu Sans", sans-serif; }
.pointer { position: absolute; left: 68%; top: 42%; }
.notes { height: 42px; flex: none; display: flex; border: 1px solid #8f949b; border-width: 0 0 1px 1px; border-top: 5px solid #eceef1; background: #fff; }
.notes textarea { flex: 1; min-width: 0; border: 0; border-top: 1px solid #8f949b; resize: none; padding: 2px 10px; font: 15px/24px "Open Sans", sans-serif; outline: 0; overflow: hidden; background: #fff; }
.notes textarea::placeholder { color: #222; opacity: 1; }
.grey { padding: 6px 0; }
.grey .caret.up { border-bottom-color: #999; }
.grey .caret.down { border-top-color: #999; }

.status { height: 22px; flex: none; display: flex; align-items: center; background: linear-gradient(#dfe1e6, #c9ccd3 70%, #bfc3ca); color: #444; padding-right: 5px; }
.st { padding: 0 9px; line-height: 16px; border-right: 1px solid #9ea3ab; }
.st:first-child { padding-left: 8px; }
.views { display: flex; border-left: 1px solid #9ea3ab; padding-left: 4px; height: 20px; }
.views button { width: 19px; height: 19px; }
.views .on { background: #ffdc6c; border: 1px solid #c99a28; border-radius: 2px; }
.views svg { fill: none; stroke: #555; }
.pct { margin: 0 8px 0 9px; }
.round svg { fill: #f5f6f8; stroke: #6c7079; }
.round:last-child { margin-left: 8px; }
.zoom { appearance: none; width: 101px; height: 14px; margin: 0; background: linear-gradient(#8a8f98, #8a8f98) center / 100% 1px no-repeat; }
.zoom::-webkit-slider-thumb { appearance: none; width: 9px; height: 13px; background: #fff; border: 1px solid #666; border-radius: 1px 1px 5px 5px; }

.taskbar { height: 40px; flex: none; display: flex; align-items: center; background: #0c0a0b; color: #fff; padding-right: 3px; }
.start { width: 48px; height: 40px; background: #0a0a0a; }
.search { width: 344px; height: 40px; display: flex; align-items: center; background: #f2f2f2; padding: 0 15px 0 9px; }
.search input { flex: 1; min-width: 0; border: 0; background: none; outline: 0; padding: 0 0 0 9px; font: 14px/20px "Open Sans", sans-serif; }
.search input::placeholder { color: #555; opacity: 1; }
.apps { display: flex; align-self: stretch; }
.apps button { width: 41px; margin-right: 8px; border-bottom: 2px solid #86b9e6; }
.apps .plain { width: 48px; margin-right: 7px; border-color: transparent; }
.apps .active { width: 47px; margin: 0 5px 0 -3px; background: #3c3a3b; }
.battery { width: 48px; height: 21px; border: 1px solid #888; background: linear-gradient(#1d7a36, #1d7a36) left / 65% 100% no-repeat; text-align: center; font-size: 14px; line-height: 19px; margin-right: 38px; color: #bbb; }
.people { margin-right: 22px; }
.chev { margin-right: 8px; }
.sound { margin-right: 9px; }
.lang { font-size: 12px; margin-right: 13px; }
.clock { display: flex; flex-direction: column; align-items: center; font-size: 12px; line-height: 18px; width: 60px; white-space: nowrap; }
.notify { width: 54px; height: 40px; border-right: 1px solid #444; padding-right: 5px; }

.player { position: absolute; left: 171px; right: 170px; bottom: 10px; display: flex; align-items: flex-end; gap: 10px; }
.pause { width: 65px; height: 40px; gap: 6px; border-radius: 4px; background: rgba(31, 31, 31, .9); flex: none; }
.pause i { width: 6px; height: 20px; background: #fff; }
.controls { flex: 1; height: 32px; display: flex; align-items: center; border-radius: 3px; background: rgba(31, 31, 31, .9); padding: 0 9px 0 10px; }
.track { position: relative; flex: 1; height: 12px; margin-right: 13px; }
.track input { appearance: none; display: block; width: 100%; height: 12px; margin: 0; border: 1px solid #6e6e6e; background: linear-gradient(#0048ff, #0048ff) left / 0 100% no-repeat; }
.track input::-webkit-slider-thumb { appearance: none; width: 2px; height: 10px; background: #999; }
.track output { position: absolute; bottom: 14px; transform: translateX(-50%); padding: 0 4px; background: #fff; color: #000; font: 11px/16px "DejaVu Sans", sans-serif; box-shadow: 1px 1px 0 #222; }
.track output::after { content: ""; position: absolute; left: 50%; top: 100%; margin-left: -3px; border: 3px solid transparent; border-top-color: #fff; border-bottom: 0; }
.volume { display: flex; align-items: flex-end; gap: 2px; height: 12px; margin-right: 9px; }
.volume i { width: 3px; background: #0048ff; }
.controls button + button { margin-left: 10px; }
.controls button:last-child { margin-right: 1px; }
</style>
